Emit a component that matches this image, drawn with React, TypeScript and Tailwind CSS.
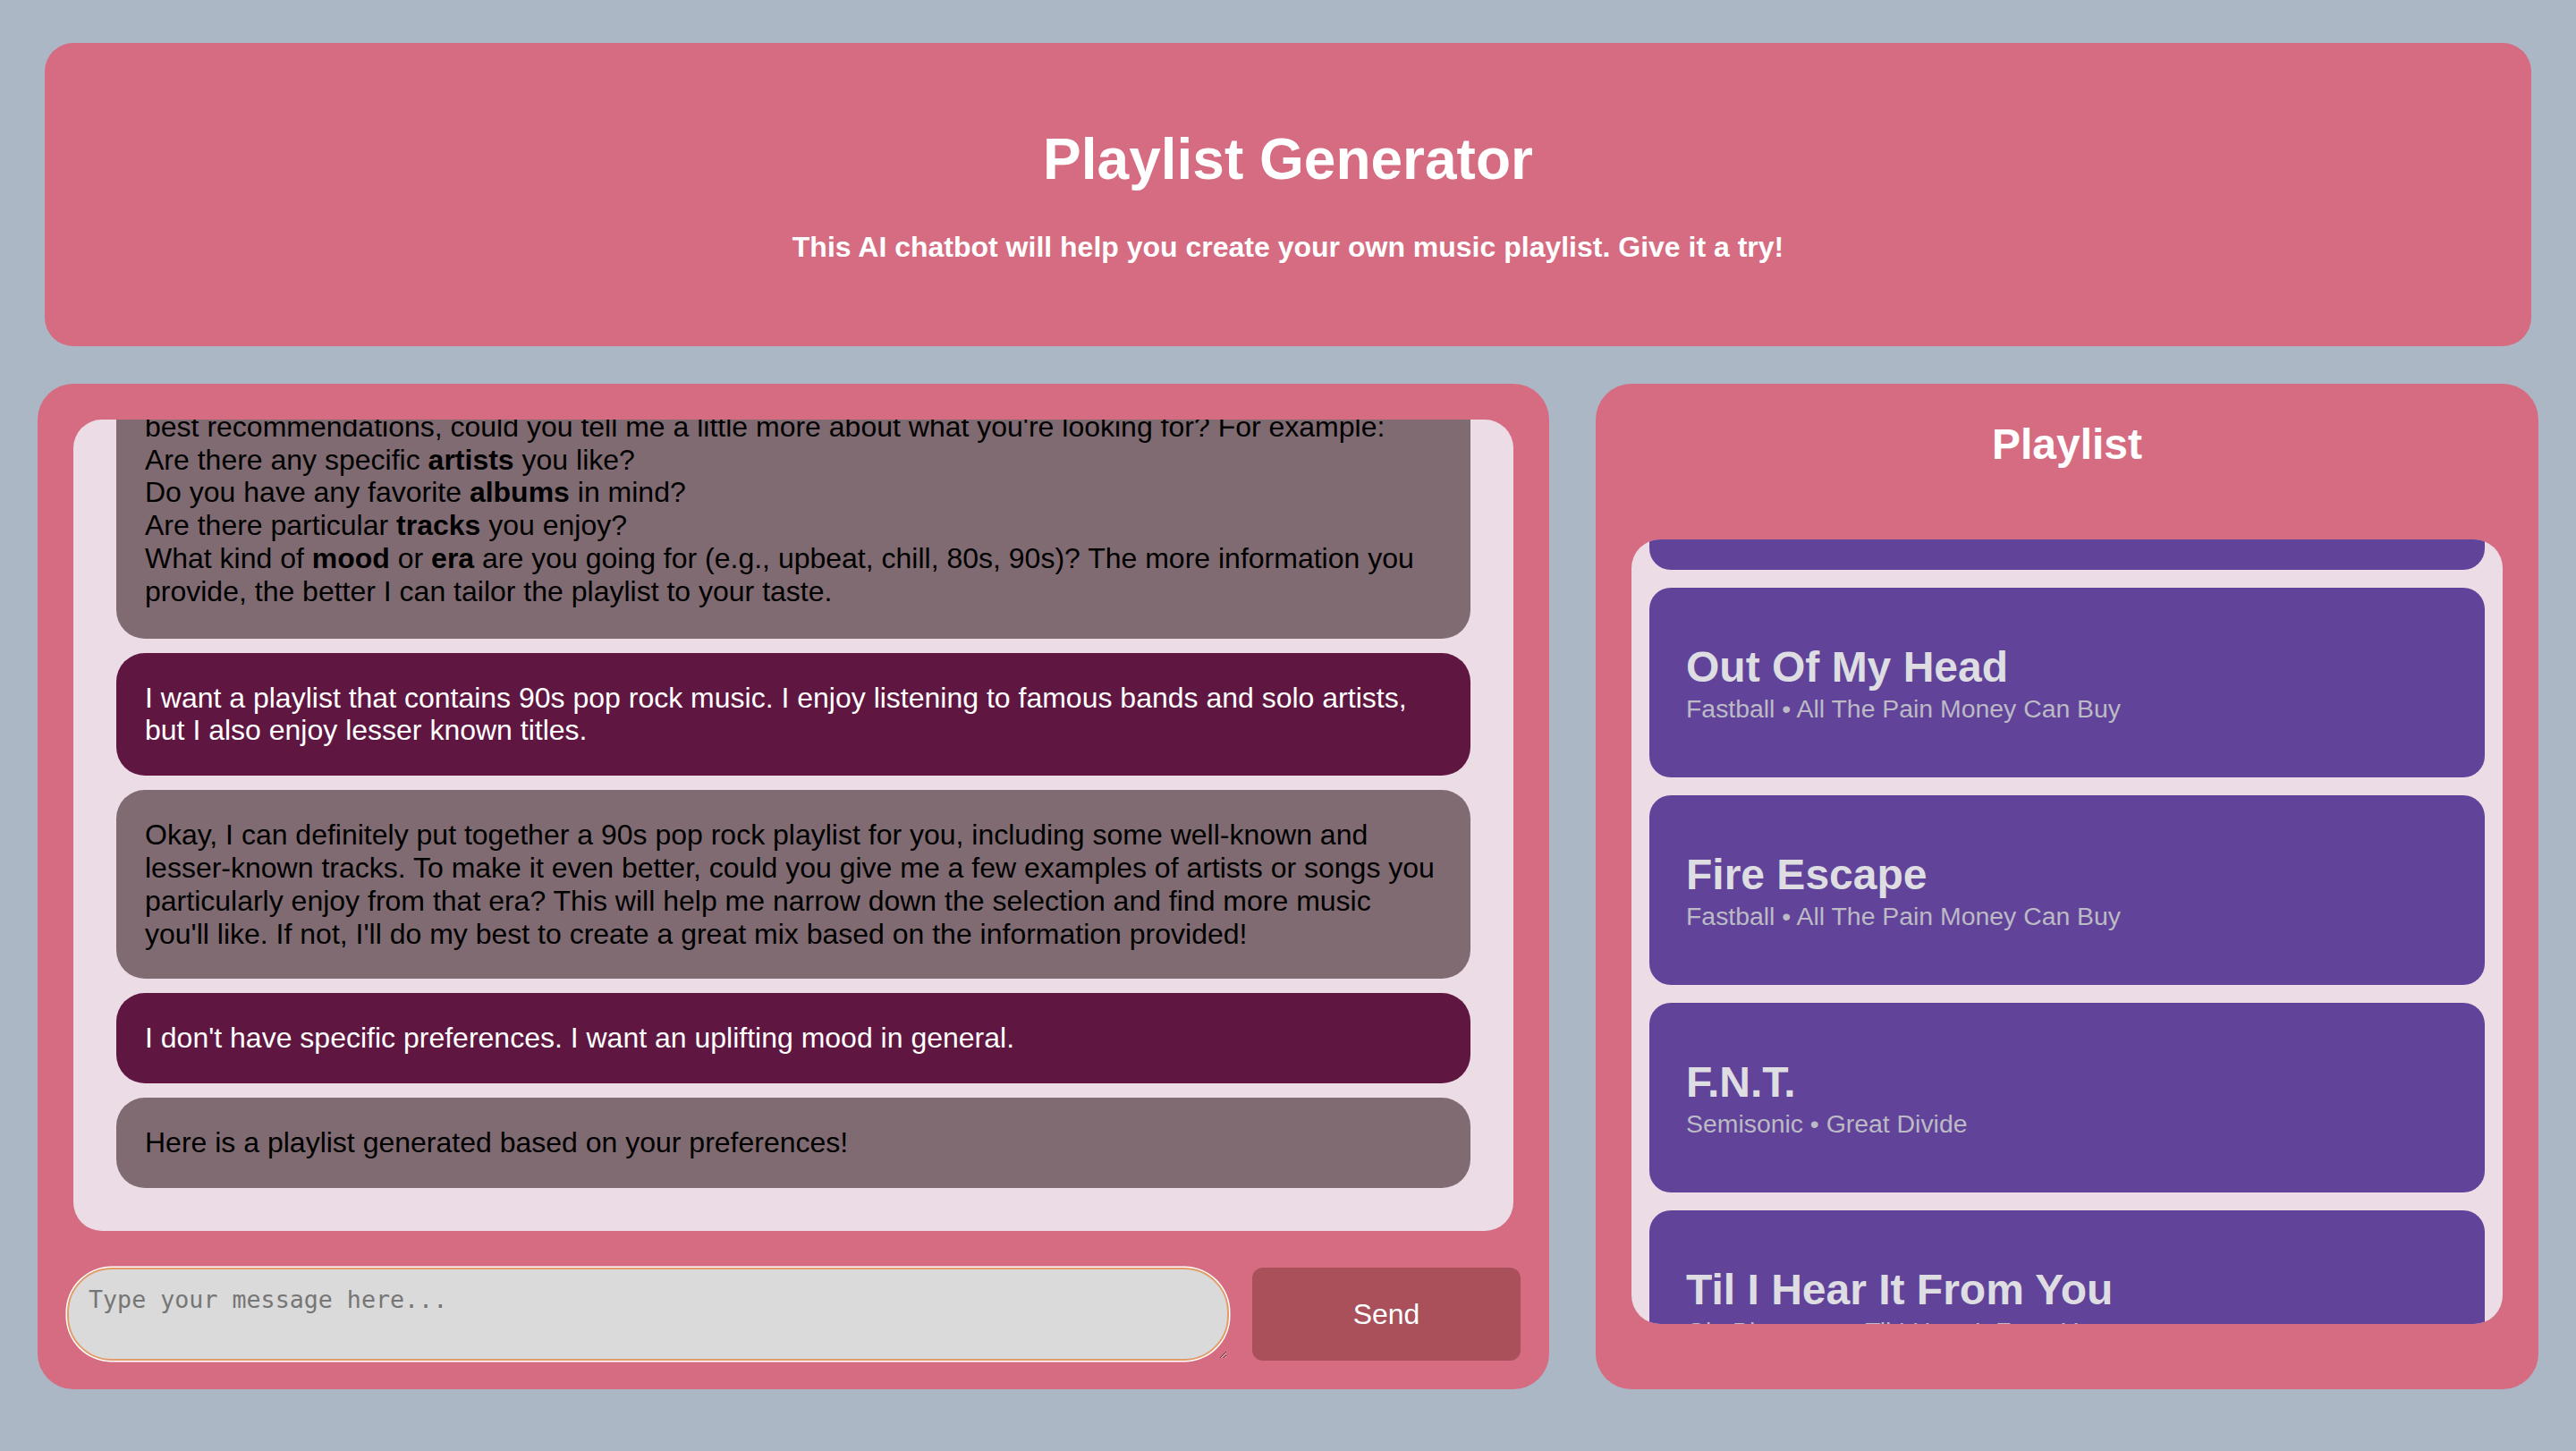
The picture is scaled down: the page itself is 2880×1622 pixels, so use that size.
import React, { useEffect, useRef } from "react";

interface Message {
  from: "bot" | "user";
  body: React.ReactNode;
}

interface Track {
  title: string;
  artist: string;
  album: string;
}

const messages: Message[] = [
  {
    from: "bot",
    body: (
      <>
        Hi there! I'd love to help you put together a playlist. To make sure I can give you the
        <br />
        best recommendations, could you tell me a little more about what you're looking for? For example:
        <br />
        Are there any specific <b>artists</b> you like?
        <br />
        Do you have any favorite <b>albums</b> in mind?
        <br />
        Are there particular <b>tracks</b> you enjoy?
        <br />
        What kind of <b>mood</b> or <b>era</b> are you going for (e.g., upbeat, chill, 80s, 90s)? The more
        information you provide, the better I can tailor the playlist to your taste.
      </>
    ),
  },
  {
    from: "user",
    body: "I want a playlist that contains 90s pop rock music. I enjoy listening to famous bands and solo artists, but I also enjoy lesser known titles.",
  },
  {
    from: "bot",
    body: "Okay, I can definitely put together a 90s pop rock playlist for you, including some well-known and lesser-known tracks. To make it even better, could you give me a few examples of artists or songs you particularly enjoy from that era? This will help me narrow down the selection and find more music you'll like. If not, I'll do my best to create a great mix based on the information provided!",
  },
  {
    from: "user",
    body: "I don't have specific preferences. I want an uplifting mood in general.",
  },
  {
    from: "bot",
    body: "Here is a playlist generated based on your preferences!",
  },
];

const tracks: Track[] = [
  { title: "Hey Jealousy", artist: "Gin Blossoms", album: "New Miserable Experience" },
  { title: "Out Of My Head", artist: "Fastball", album: "All The Pain Money Can Buy" },
  { title: "Fire Escape", artist: "Fastball", album: "All The Pain Money Can Buy" },
  { title: "F.N.T.", artist: "Semisonic", album: "Great Divide" },
  { title: "Til I Hear It From You", artist: "Gin Blossoms", album: "Til I Hear It From You" },
  { title: "Closing Time", artist: "Semisonic", album: "Feeling Strangely Fine" },
];

const Chat = () => {
  const chatRef = useRef<HTMLDivElement>(null);

  useEffect(() => {
    if (chatRef.current) chatRef.current.scrollTop = chatRef.current.scrollHeight;
  }, []);

  return (
    <section className="flex h-[1124px] w-[1690px] shrink-0 flex-col rounded-[40px] bg-[#d66c82] pt-[40px]">
      <div ref={chatRef} className="mx-[40px] h-[907px] overflow-hidden rounded-[32px] bg-[#ebdce5]">
        <div className="flex flex-col gap-[16px] p-[48px]">
          {messages.map((m, i) => (
            <div
              key={i}
              className={
                m.from === "user"
                  ? "rounded-[32px] bg-[#5f1641] p-[32px] text-[32px] leading-[36.8px] text-white"
                  : i === 0
                    ? "rounded-[32px] bg-[#806b72] px-[32px] pt-[32px] pb-[34px] text-[32px] leading-[36.8px] text-black"
                    : "rounded-[32px] bg-[#806b72] p-[32px] text-[32px] leading-[36.8px] text-black"
              }
            >
              {m.body}
            </div>
          ))}
        </div>
      </div>

      <div className="mt-[41px] flex items-center gap-[26px] pl-[33px] pr-[32px]">
        <textarea
          placeholder="Type your message here..."
          className="h-[104px] flex-1 rounded-[50px] border-[2.5px] border-[#e19c6a] bg-[#dadada] px-[22px] pt-[18px] pb-[10px] font-['DejaVu_Sans_Mono',monospace] text-[26.67px] leading-[normal] text-black shadow-[0_0_0_1.5px_#ffffff] outline-none placeholder:text-[#767676]"
        />
        <button className="h-[104px] w-[300px] rounded-[12px] bg-[#a9505b] text-[32px] text-white">
          Send
        </button>
      </div>
    </section>
  );
};

const Playlist = () => {
  const listRef = useRef<HTMLDivElement>(null);

  useEffect(() => {
    if (listRef.current) listRef.current.scrollTop = 198;
  }, []);

  return (
    <section className="flex h-[1124px] w-[1054px] shrink-0 flex-col rounded-[40px] bg-[#d66c82] px-[40px] pt-[40px]">
      <h2 className="text-center text-[48px] font-bold leading-[55.2px] text-white">Playlist</h2>
      <div ref={listRef} className="mt-[79px] h-[877px] overflow-hidden rounded-[32px] bg-[#ebdce5]">
        <div className="flex flex-col gap-[20px] p-[20px]">
          {tracks.map((t) => (
            <div
              key={t.title}
              className="flex h-[212px] shrink-0 flex-col justify-center rounded-[24px] bg-[#61449a] px-[41px]"
            >
              <div className="text-[48px] font-bold leading-[55.2px] text-[#dedde2]">{t.title}</div>
              <div className="mt-[3px] text-[28.4px] leading-[32.2px] text-[#bcbac4]">
                {t.artist} • {t.album}
              </div>
            </div>
          ))}
        </div>
      </div>
    </section>
  );
};

export default function App() {
  return (
    <div className="min-h-screen bg-[#abb7c4] pt-[48px] font-['Liberation_Sans',Arial,sans-serif]">
      <header className="mx-[50px] flex h-[339px] flex-col items-center rounded-[32px] bg-[#d66c82] pt-[94px] text-white">
        <h1 className="text-[64px] font-bold leading-[73.6px]">Playlist Generator</h1>
        <p className="mt-[42px] text-[32px] font-bold leading-[36.8px]">
          This AI chatbot will help you create your own music playlist. Give it a try!
        </p>
      </header>

      <main className="mt-[42px] flex gap-[52px] px-[42px]">
        <Chat />
        <Playlist />
      </main>
    </div>
  );
}
